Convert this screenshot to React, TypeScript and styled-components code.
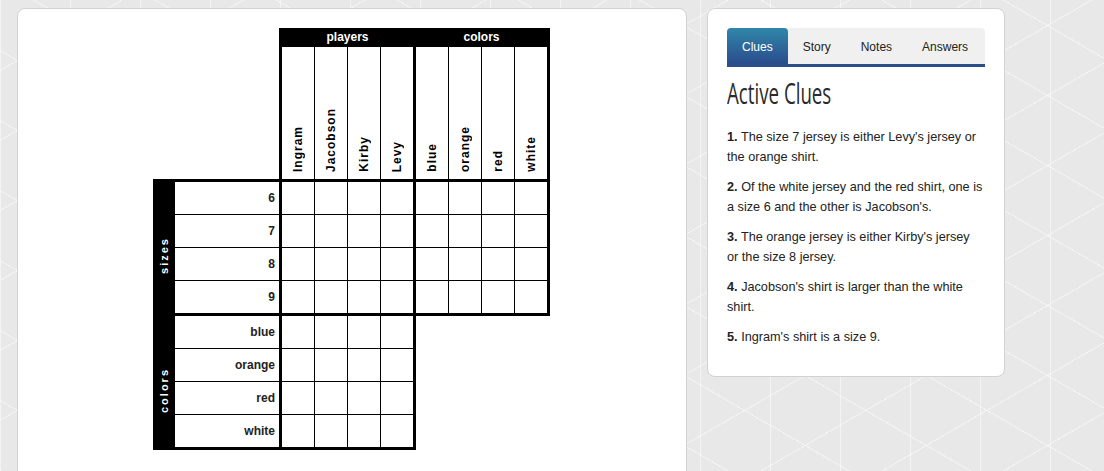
import React from "react";
import styled, { createGlobalStyle } from "styled-components";

const Global = createGlobalStyle`
  *, *::before, *::after { box-sizing: border-box; }
  html, body { margin: 0; padding: 0; overflow: hidden; }
  body {
    font-family: "Liberation Sans", Arial, sans-serif;
    background-color: #e8e8e8;
    background-image:
      repeating-linear-gradient(90deg, rgba(255,255,255,0.5) 0 1px, transparent 1px 70px),
      repeating-linear-gradient(30deg, rgba(255,255,255,0.5) 0 1px, transparent 1px 60.6px),
      repeating-linear-gradient(150deg, rgba(255,255,255,0.5) 0 1px, transparent 1px 60.6px);
  }
`;

const Page = styled.div`
  display: flex;
  align-items: flex-start;
  gap: 20px;
  padding: 8px 0 0 17px;
  height: 471px;
`;

const PuzzleCard = styled.div`
  width: 670px;
  height: 520px;
  flex: none;
  background: #fff;
  border: 1px solid #d2d2d2;
  border-radius: 8px;
  padding: 19px 0 0 135px;
`;

const Puzzle = styled.div`
  display: grid;
  grid-template-columns: 22px 104px 137px 134px;
  grid-template-rows: 151px 137px 134px;
`;

const Corner = styled.div`
  grid-column: span 2;
`;

const HeaderBlock = styled.div<{ $first?: boolean }>`
  background: #000;
  padding: 0 3px 0 ${(p) => (p.$first ? 3 : 0)}px;
  display: flex;
  flex-direction: column;
`;

const GroupTitle = styled.div`
  height: 19px;
  line-height: 19px;
  color: #fff;
  font-weight: bold;
  font-size: 12px;
  text-align: center;
`;

const ColumnLabels = styled.div`
  flex: 1;
  display: grid;
  grid-template-columns: repeat(4, 32px);
  gap: 1px;
`;

const ColumnLabel = styled.div`
  background: #fff;
  display: flex;
  justify-content: center;
  align-items: flex-end;
  padding-bottom: 7px;
`;

const ColumnText = styled.span`
  writing-mode: vertical-rl;
  transform: rotate(180deg);
  font-weight: bold;
  font-size: 12px;
  letter-spacing: 1px;
  color: #000;
  white-space: nowrap;
`;

const SideLabel = styled.div`
  background: #000;
  display: flex;
  align-items: center;
  justify-content: center;
  padding-top: 16px;
`;

const SideText = styled.span`
  writing-mode: vertical-rl;
  transform: rotate(180deg);
  color: #fff;
  font-weight: bold;
  font-size: 11px;
  letter-spacing: 2px;
  white-space: nowrap;
`;

const RowLabels = styled.div<{ $noTop?: boolean }>`
  background: #000;
  border-top: ${(p) => (p.$noTop ? 0 : 3)}px solid #000;
  border-bottom: 3px solid #000;
  display: grid;
  grid-auto-rows: 32px;
  gap: 1px;
`;

const RowLabel = styled.div`
  background: #fff;
  display: flex;
  align-items: center;
  justify-content: flex-end;
  padding-right: 4px;
  font-weight: bold;
  font-size: 12px;
  color: #222;
`;

const Block = styled.div<{ $noLeft?: boolean; $noTop?: boolean }>`
  background: #000;
  border: 3px solid #000;
  border-left-width: ${(p) => (p.$noLeft ? 0 : 3)}px;
  border-top-width: ${(p) => (p.$noTop ? 0 : 3)}px;
  display: grid;
  grid-template-columns: repeat(4, 32px);
  grid-auto-rows: 32px;
  gap: 1px;
`;

const Cell = styled.div`
  background: #fff;
`;

const CluesCard = styled.div`
  width: 298px;
  flex: none;
  background: #fff;
  border: 1px solid #d2d2d2;
  border-radius: 8px;
  padding: 19px;
`;

const Tabs = styled.div`
  display: flex;
  height: 39px;
  background: #f0f0f0;
  border-radius: 4px 4px 0 0;
  border-bottom: 3px solid #2c4e8b;
`;

const Tab = styled.div<{ $active?: boolean }>`
  height: 36px;
  padding: 2px 15px 0;
  line-height: 35px;
  font-size: 12px;
  color: ${(p) => (p.$active ? "#fff" : "#222")};
  background: ${(p) =>
    p.$active ? "linear-gradient(to bottom, #2f87a9, #2b4c8c)" : "transparent"};
  border-radius: 4px 4px 0 0;
`;

const Heading = styled.h2`
  margin: 6px 0 14px;
  height: 40px;
  line-height: 40px;
  font-family: "Open Sans", sans-serif;
  font-weight: 400;
  font-size: 29px;
  color: #2a2a2a;
  white-space: nowrap;
  transform: scaleX(0.645);
  transform-origin: left center;
`;

const Clue = styled.p`
  margin: 0 0 10px;
  padding-right: 1px;
  font-size: 12.7px;
  line-height: 20px;
  color: #222;
`;

const players = ["Ingram", "Jacobson", "Kirby", "Levy"];
const colors = ["blue", "orange", "red", "white"];
const sizes = ["6", "7", "8", "9"];

const clues = [
  "The size 7 jersey is either Levy's jersey or the orange shirt.",
  "Of the white jersey and the red shirt, one is a size 6 and the other is Jacobson's.",
  "The orange jersey is either Kirby's jersey or the size 8 jersey.",
  "Jacobson's shirt is larger than the white shirt.",
  "Ingram's shirt is a size 9.",
];

const cells = Array.from({ length: 16 }, (_, i) => <Cell key={i} />);

export default function App() {
  return (
    <>
      <Global />
      <Page>
        <PuzzleCard>
          <Puzzle>
            <Corner />
            <HeaderBlock $first>
              <GroupTitle>players</GroupTitle>
              <ColumnLabels>
                {players.map((n) => (
                  <ColumnLabel key={n}>
                    <ColumnText>{n}</ColumnText>
                  </ColumnLabel>
                ))}
              </ColumnLabels>
            </HeaderBlock>
            <HeaderBlock>
              <GroupTitle>colors</GroupTitle>
              <ColumnLabels>
                {colors.map((n) => (
                  <ColumnLabel key={n}>
                    <ColumnText>{n}</ColumnText>
                  </ColumnLabel>
                ))}
              </ColumnLabels>
            </HeaderBlock>

            <SideLabel>
              <SideText>sizes</SideText>
            </SideLabel>
            <RowLabels>
              {sizes.map((s) => (
                <RowLabel key={s}>{s}</RowLabel>
              ))}
            </RowLabels>
            <Block>{cells}</Block>
            <Block $noLeft>{cells}</Block>

            <SideLabel>
              <SideText>colors</SideText>
            </SideLabel>
            <RowLabels $noTop>
              {colors.map((s) => (
                <RowLabel key={s}>{s}</RowLabel>
              ))}
            </RowLabels>
            <Block $noTop>{cells}</Block>
          </Puzzle>
        </PuzzleCard>

        <CluesCard>
          <Tabs>
            <Tab $active>Clues</Tab>
            <Tab>Story</Tab>
            <Tab>Notes</Tab>
            <Tab>Answers</Tab>
          </Tabs>
          <Heading>Active Clues</Heading>
          {clues.map((c, i) => (
            <Clue key={i}>
              <b>{i + 1}.</b> {c}
            </Clue>
          ))}
        </CluesCard>
      </Page>
    </>
  );
}
